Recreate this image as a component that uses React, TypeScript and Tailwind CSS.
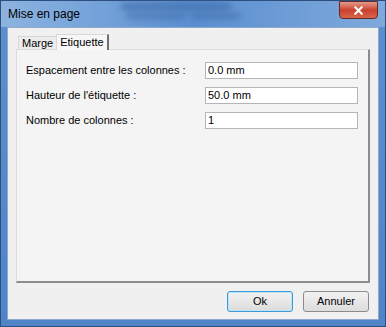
import { X } from "lucide-react";

const fields = [
  { label: "Espacement entre les colonnes :", value: "0.0 mm" },
  { label: "Hauteur de l'étiquette :", value: "50.0 mm" },
  { label: "Nombre de colonnes :", value: "1" },
];

export default function App() {
  return (
    <div
      className="w-[386px] h-[327px] flex flex-col bg-gradient-to-b from-[#5b8fcf] to-[#4f84c6] border border-[#2d4f80] text-[11px] text-black"
      style={{ fontFamily: '"Liberation Sans", Arial, sans-serif' }}
    >
      {/* Title bar */}
      <div className="relative h-[26px] flex items-center pl-[7px] bg-gradient-to-r from-[#8db4e0] via-[#5b8fd0] to-[#7fa9dc]">
        {/* blurred background text of aero glass */}
        <div className="absolute left-[120px] top-[2px] w-[110px] h-[7px] rounded bg-[#3e6aa6] blur-[3px] opacity-70" />
        <div className="absolute left-[125px] top-[12px] w-[60px] h-[6px] rounded bg-[#3e6aa6] blur-[3px] opacity-60" />
        <div className="absolute left-[190px] top-[12px] w-[50px] h-[6px] rounded bg-[#3e6aa6] blur-[3px] opacity-60" />
        <span className="relative text-[12px] text-black">Mise en page</span>
        <div className="absolute right-[7px] top-0 w-[39px] h-[18px] rounded-b-[4px] border border-[#6b2a22] bg-gradient-to-b from-[#e09a8c] via-[#c9412d] to-[#d8644c] flex items-center justify-center">
          <X className="w-[13px] h-[13px] text-white" strokeWidth={4} />
        </div>
      </div>

      <div className="flex-1 px-[6px] pb-[6px] flex">
        <div className="flex-1 bg-[#f0f0f0] border border-[#8fa9cc] flex flex-col px-[8px]">
          {/* Tabs */}
          <div className="flex items-end h-[21px] pl-[2px]">
            <div className="h-[13px] px-[3px] flex items-center border-t border-l border-[#d8d8d8] bg-[#ececec]">
              Marge
            </div>
            <div className="h-[16px] px-[3px] flex items-center border-t border-l border-r-2 border-r-[#707070] border-[#d8d8d8] bg-[#f7f7f7] -mb-px relative z-10">
              Etiquette
            </div>
          </div>
          {/* Panel */}
          <div className="h-[234px] bg-[#f4f4f4] border-t border-l border-[#dcdcdc] border-r-2 border-r-[#8c8c8c] border-b-2 border-b-[#8c8c8c] pl-[9px] pr-[10px] pt-[12px] flex flex-col gap-[8px]">
            {fields.map((f) => (
              <div key={f.label} className="flex items-center justify-between h-[17px]">
                <span>{f.label}</span>
                <div className="w-[153px] h-[17px] bg-white border border-[#b5b5b5] flex items-center pl-[2px]">
                  {f.value}
                </div>
              </div>
            ))}
          </div>
          {/* Buttons */}
          <div className="flex justify-end gap-[10px] mt-[8px] pr-[1px]">
            <button className="w-[66px] h-[21px] rounded-[3px] border border-[#3c9ad8] bg-gradient-to-b from-[#f2f2f2] to-[#dcdcdc] shadow-[inset_0_0_0_1px_#bfe3f7]">
              Ok
            </button>
            <button className="w-[66px] h-[21px] rounded-[3px] border border-[#8c8c8c] bg-gradient-to-b from-[#f2f2f2] to-[#dcdcdc]">
              Annuler
            </button>
          </div>
        </div>
      </div>
    </div>
  );
}
